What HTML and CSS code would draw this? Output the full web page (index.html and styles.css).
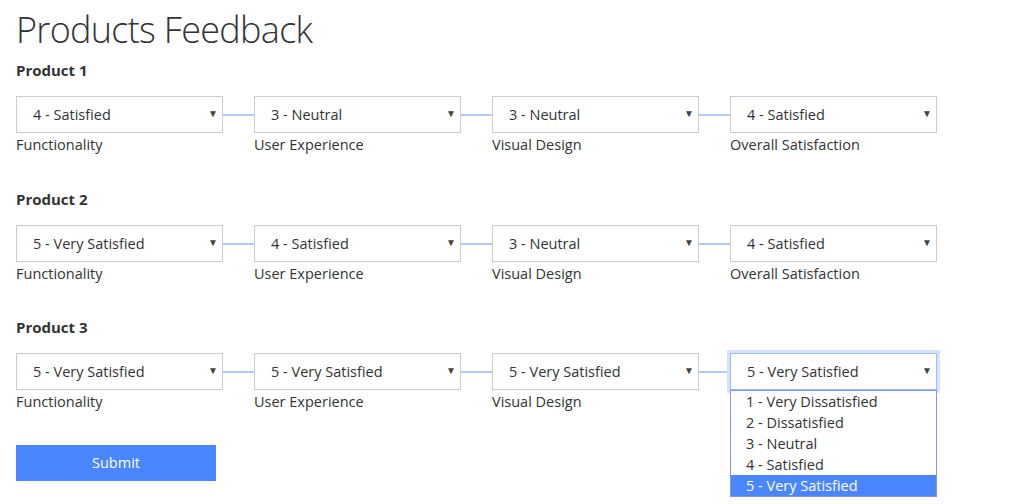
FILE: index.html
```html
<!DOCTYPE html>
<html lang="en">
<head>
    <meta charset="UTF-8">
    <meta name="viewport" content="width=device-width, initial-scale=1.0">
    <title>Products Feedback</title>
    <link rel="stylesheet" href="styles.css">
</head>
<body>
    <h1 class="title">Products Feedback</h1>

    <div class="product">
        <h2 class="product-name">Product 1</h2>
        <div class="fields">
            <div class="field">
                <div class="picker"><select><option>4 - Satisfied</option></select></div>
                <span class="label">Functionality</span>
            </div>
            <div class="link"></div>
            <div class="field">
                <div class="picker"><select><option>3 - Neutral</option></select></div>
                <span class="label">User Experience</span>
            </div>
            <div class="link"></div>
            <div class="field">
                <div class="picker"><select><option>3 - Neutral</option></select></div>
                <span class="label">Visual Design</span>
            </div>
            <div class="link"></div>
            <div class="field">
                <div class="picker"><select><option>4 - Satisfied</option></select></div>
                <span class="label">Overall Satisfaction</span>
            </div>
        </div>
    </div>

    <div class="product">
        <h2 class="product-name">Product 2</h2>
        <div class="fields">
            <div class="field">
                <div class="picker"><select><option>5 - Very Satisfied</option></select></div>
                <span class="label">Functionality</span>
            </div>
            <div class="link"></div>
            <div class="field">
                <div class="picker"><select><option>4 - Satisfied</option></select></div>
                <span class="label">User Experience</span>
            </div>
            <div class="link"></div>
            <div class="field">
                <div class="picker"><select><option>3 - Neutral</option></select></div>
                <span class="label">Visual Design</span>
            </div>
            <div class="link"></div>
            <div class="field">
                <div class="picker"><select><option>4 - Satisfied</option></select></div>
                <span class="label">Overall Satisfaction</span>
            </div>
        </div>
    </div>

    <div class="product">
        <h2 class="product-name">Product 3</h2>
        <div class="fields">
            <div class="field">
                <div class="picker"><select><option>5 - Very Satisfied</option></select></div>
                <span class="label">Functionality</span>
            </div>
            <div class="link"></div>
            <div class="field">
                <div class="picker"><select><option>5 - Very Satisfied</option></select></div>
                <span class="label">User Experience</span>
            </div>
            <div class="link"></div>
            <div class="field">
                <div class="picker"><select><option>5 - Very Satisfied</option></select></div>
                <span class="label">Visual Design</span>
            </div>
            <div class="link"></div>
            <div class="field">
                <div class="picker open"><select><option>5 - Very Satisfied</option></select>
                    <ul class="options">
                        <li>1 - Very Dissatisfied</li>
                        <li>2 - Dissatisfied</li>
                        <li>3 - Neutral</li>
                        <li>4 - Satisfied</li>
                        <li class="selected">5 - Very Satisfied</li>
                    </ul>
                </div>
                <span class="label hidden">Overall Satisfaction</span>
            </div>
        </div>
    </div>

    <button class="submit">Submit</button>
</body>
</html>
```

FILE: styles.css
```css
body {
    margin: 0;
    padding: 0 16px 24px;
    font-family: "Open Sans", "Noto Sans", sans-serif;
    font-size: 14.5px;
    color: #333;
}
.title {
    margin: 6px 0 0;
    font-size: 36px;
    font-weight: 300;
    letter-spacing: -0.7px;
    line-height: 47px;
    color: #333;
}
.product {
    margin-top: 6px;
    margin-bottom: 31.5px;
}
.product + .product {
    margin-top: 0;
}
.product-name {
    margin: 0 0 15px;
    font-size: 15px;
    font-weight: 700;
    line-height: 22px;
}
.fields {
    display: flex;
    align-items: flex-start;
}
.field {
    display: flex;
    flex-direction: column;
    width: 207px;
}
.link {
    width: 31px;
    height: 2px;
    margin-top: 18px;
    background-color: #b4c9fb;
}
.picker {
    position: relative;
}
.picker::after {
    content: "\25BC";
    position: absolute;
    right: 5px;
    top: 10px;
    font-size: 10px;
    color: #444;
    pointer-events: none;
}
.picker select {
    display: block;
    width: 100%;
    height: 37px;
    margin: 0;
    padding: 0 0 0 16px;
    border: 1px solid #ccc;
    border-radius: 0;
    background: #fff;
    font-family: inherit;
    font-size: 14.5px;
    color: #333;
    -webkit-appearance: none;
    appearance: none;
}
.picker.open select {
    border-color: #9dbcfb;
    box-shadow: 0 0 0 3px #d5e3fe;
}
.label {
    padding-top: 1px;
    line-height: 22px;
}
.label.hidden {
    visibility: hidden;
}
.options {
    position: absolute;
    top: 37px;
    left: 0;
    right: 0;
    z-index: 2;
    margin: 0;
    padding: 0;
    list-style: none;
    background: #fff;
    border: 1px solid #8595d6;
}
.options li {
    height: 21px;
    padding-left: 15px;
    line-height: 21px;
}
.options .selected {
    background-color: #4a86ff;
    color: #fff;
}
.submit {
    display: block;
    width: 200px;
    height: 36px;
    margin: 0;
    border: 0;
    background-color: #4a86ff;
    color: #fff;
    font-family: inherit;
    font-size: 14.5px;
}
```
